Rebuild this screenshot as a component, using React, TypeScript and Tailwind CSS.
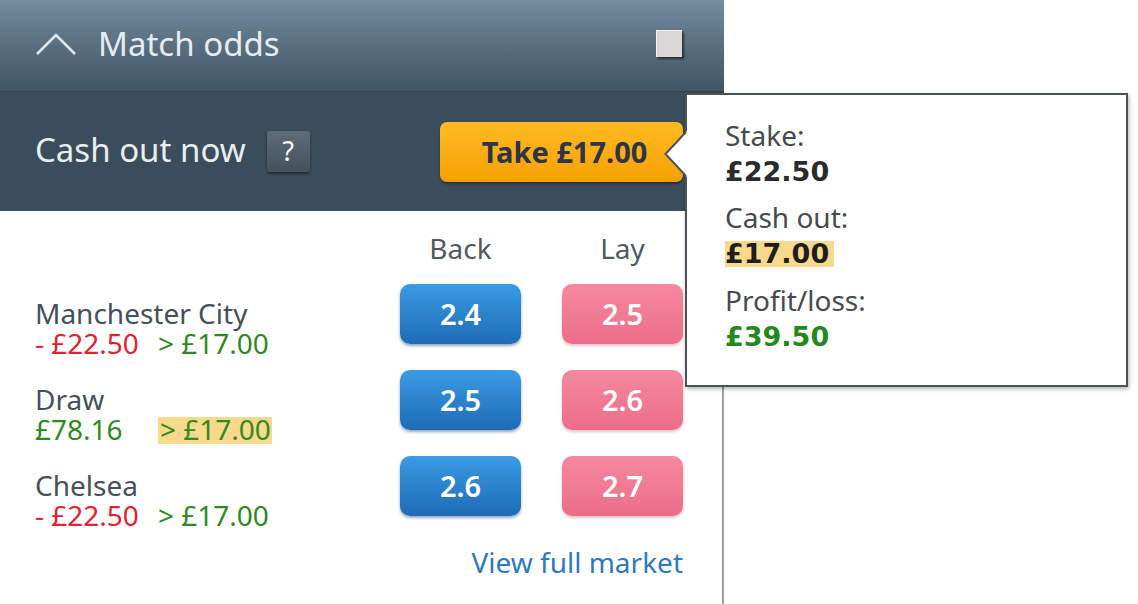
import React from 'react';

type Runner = {
  name: string;
  pl: string;
  plColor: string;
  back: string;
  lay: string;
  highlight: boolean;
};

const runners: Runner[] = [
  { name: 'Manchester City', pl: '- £22.50', plColor: 'text-[#e3222f]', back: '2.4', lay: '2.5', highlight: false },
  { name: 'Draw', pl: '£78.16', plColor: 'text-[#2f8a22]', back: '2.5', lay: '2.6', highlight: true },
  { name: 'Chelsea', pl: '- £22.50', plColor: 'text-[#e3222f]', back: '2.6', lay: '2.7', highlight: false },
];

function PriceButton({ price, kind }: { price: string; kind: 'back' | 'lay' }) {
  const colors =
    kind === 'back'
      ? 'from-[#3b9be3] to-[#1d6cb6] shadow-[0_2px_3px_rgba(20,60,110,0.45)]'
      : 'from-[#f6899f] to-[#ec6d89] shadow-[0_2px_3px_rgba(150,60,80,0.3)]';
  return (
    <div
      className={`flex h-[60px] w-[121px] items-center justify-center rounded-[10px] bg-linear-to-b ${colors} text-[29px] font-semibold text-white`}
    >
      {price}
    </div>
  );
}

function RunnerRow({ runner }: { runner: Runner }) {
  return (
    <div className="flex h-[60px] gap-[41px]">
      <div className="flex-1 pt-[14px] text-[28px] leading-[30px]">
        <div className="text-[#46505a]">{runner.name}</div>
        <div className="flex h-[30px]">
          <span className={`w-[123px] ${runner.plColor}`}>{runner.pl}</span>
          {runner.highlight ? (
            <span className="h-[27px] w-[114px] self-end bg-[#fad98c] pl-[2px] leading-[24px] text-[#2f8a22]">
              &gt; £17.00
            </span>
          ) : (
            <span className="text-[#2f8a22]">&gt; £17.00</span>
          )}
        </div>
      </div>
      <PriceButton price={runner.back} kind="back" />
      <PriceButton price={runner.lay} kind="lay" />
    </div>
  );
}

function CashOutTooltip() {
  return (
    <div className="absolute left-[685px] top-[93px] h-[294px] w-[443px] border-2 border-[#4b535a] bg-white pl-[38px] pt-[22px] shadow-[1px_2px_4px_rgba(0,0,0,0.3)]">
      <svg className="absolute left-[-23px] top-[36px]" width="23" height="46" viewBox="0 0 23 46">
        <polygon points="23,0 1,23 23,46" fill="#ffffff" />
        <polyline points="22,1 1.5,23 22,45" fill="none" stroke="#4b535a" strokeWidth="2" />
      </svg>
      <div className="text-[28px] leading-[36px] text-[#464b50]">Stake:</div>
      <div className="font-['DejaVu_Sans',sans-serif] text-[27px] font-bold leading-[38px] text-[#2b2b2b]">£22.50</div>
      <div className="mt-[8px] text-[28px] leading-[36px] text-[#464b50]">Cash out:</div>
      <div className="flex h-[38px] items-center">
        <span className="bg-[#f9d98b] pr-[5px] font-['DejaVu_Sans',sans-serif] text-[27px] font-bold leading-[26px] text-[#1e1e1e]">
          £17.00
        </span>
      </div>
      <div className="mt-[9px] text-[28px] leading-[36px] text-[#464b50]">Profit/loss:</div>
      <div className="font-['DejaVu_Sans',sans-serif] text-[27px] font-bold leading-[38px] text-[#218a1b]">£39.50</div>
    </div>
  );
}

export default function App() {
  return (
    <div className="relative h-[604px] w-[1138px] overflow-hidden bg-white font-['Noto_Sans',sans-serif]">
      <div className="flex h-[604px] w-[724px] flex-col">
        <div className="flex h-[92px] items-center border-b border-[#33434f] bg-linear-to-b from-[#738c9e] to-[#405464] pb-[4px] pl-[35px] pr-[42px]">
          <svg width="42" height="26" viewBox="0 0 42 26" className="mr-[21px]">
            <polyline points="2,23 21,4 40,23" fill="none" stroke="#e2e9ed" strokeWidth="2.5" />
          </svg>
          <span className="text-[33px] text-[#e6edf1]">Match odds</span>
          <div className="ml-auto h-[27px] w-[26px] border-l border-t border-[#f3f2f0] bg-[#dad7d4] shadow-[2px_2px_2px_rgba(0,0,0,0.55)]" />
        </div>

        <div className="flex h-[119px] items-center bg-[#3b4c5a] pl-[35px] pr-[41px]">
          <span className="pb-[4px] text-[33px] text-[#e8eef1]">Cash out now</span>
          <div className="ml-[21px] flex h-[41px] w-[43px] items-center justify-center rounded-[3px] bg-linear-to-b from-[#5d6c79] to-[#44515d] text-[27px] text-white shadow-[0_2px_3px_rgba(0,0,0,0.45)]">
            ?
          </div>
          <div className="ml-auto flex h-[60px] w-[243px] items-center justify-center rounded-[7px] bg-linear-to-b from-[#ffbb22] to-[#f6a000] pl-[6px] text-[29px] font-bold text-[#2f3447] shadow-[0_2px_2px_rgba(0,0,0,0.35)]">
            Take £17.00
          </div>
        </div>

        <div className="flex-1 border-r-2 border-[#9aa3aa] pl-[35px] pr-[39px] pt-[22px]">
          <div className="flex h-[30px] gap-[41px] text-[28px] leading-[30px] text-[#505a63]">
            <div className="flex-1" />
            <div className="w-[121px] text-center">Back</div>
            <div className="w-[121px] text-center">Lay</div>
          </div>
          <div className="mt-[21px] flex flex-col gap-[26px]">
            {runners.map((r) => (
              <RunnerRow key={r.name} runner={r} />
            ))}
          </div>
          <div className="mt-[28px] text-right text-[28px] leading-[36px] text-[#2d7bbf]">View full market</div>
        </div>
      </div>

      <CashOutTooltip />
    </div>
  );
}
